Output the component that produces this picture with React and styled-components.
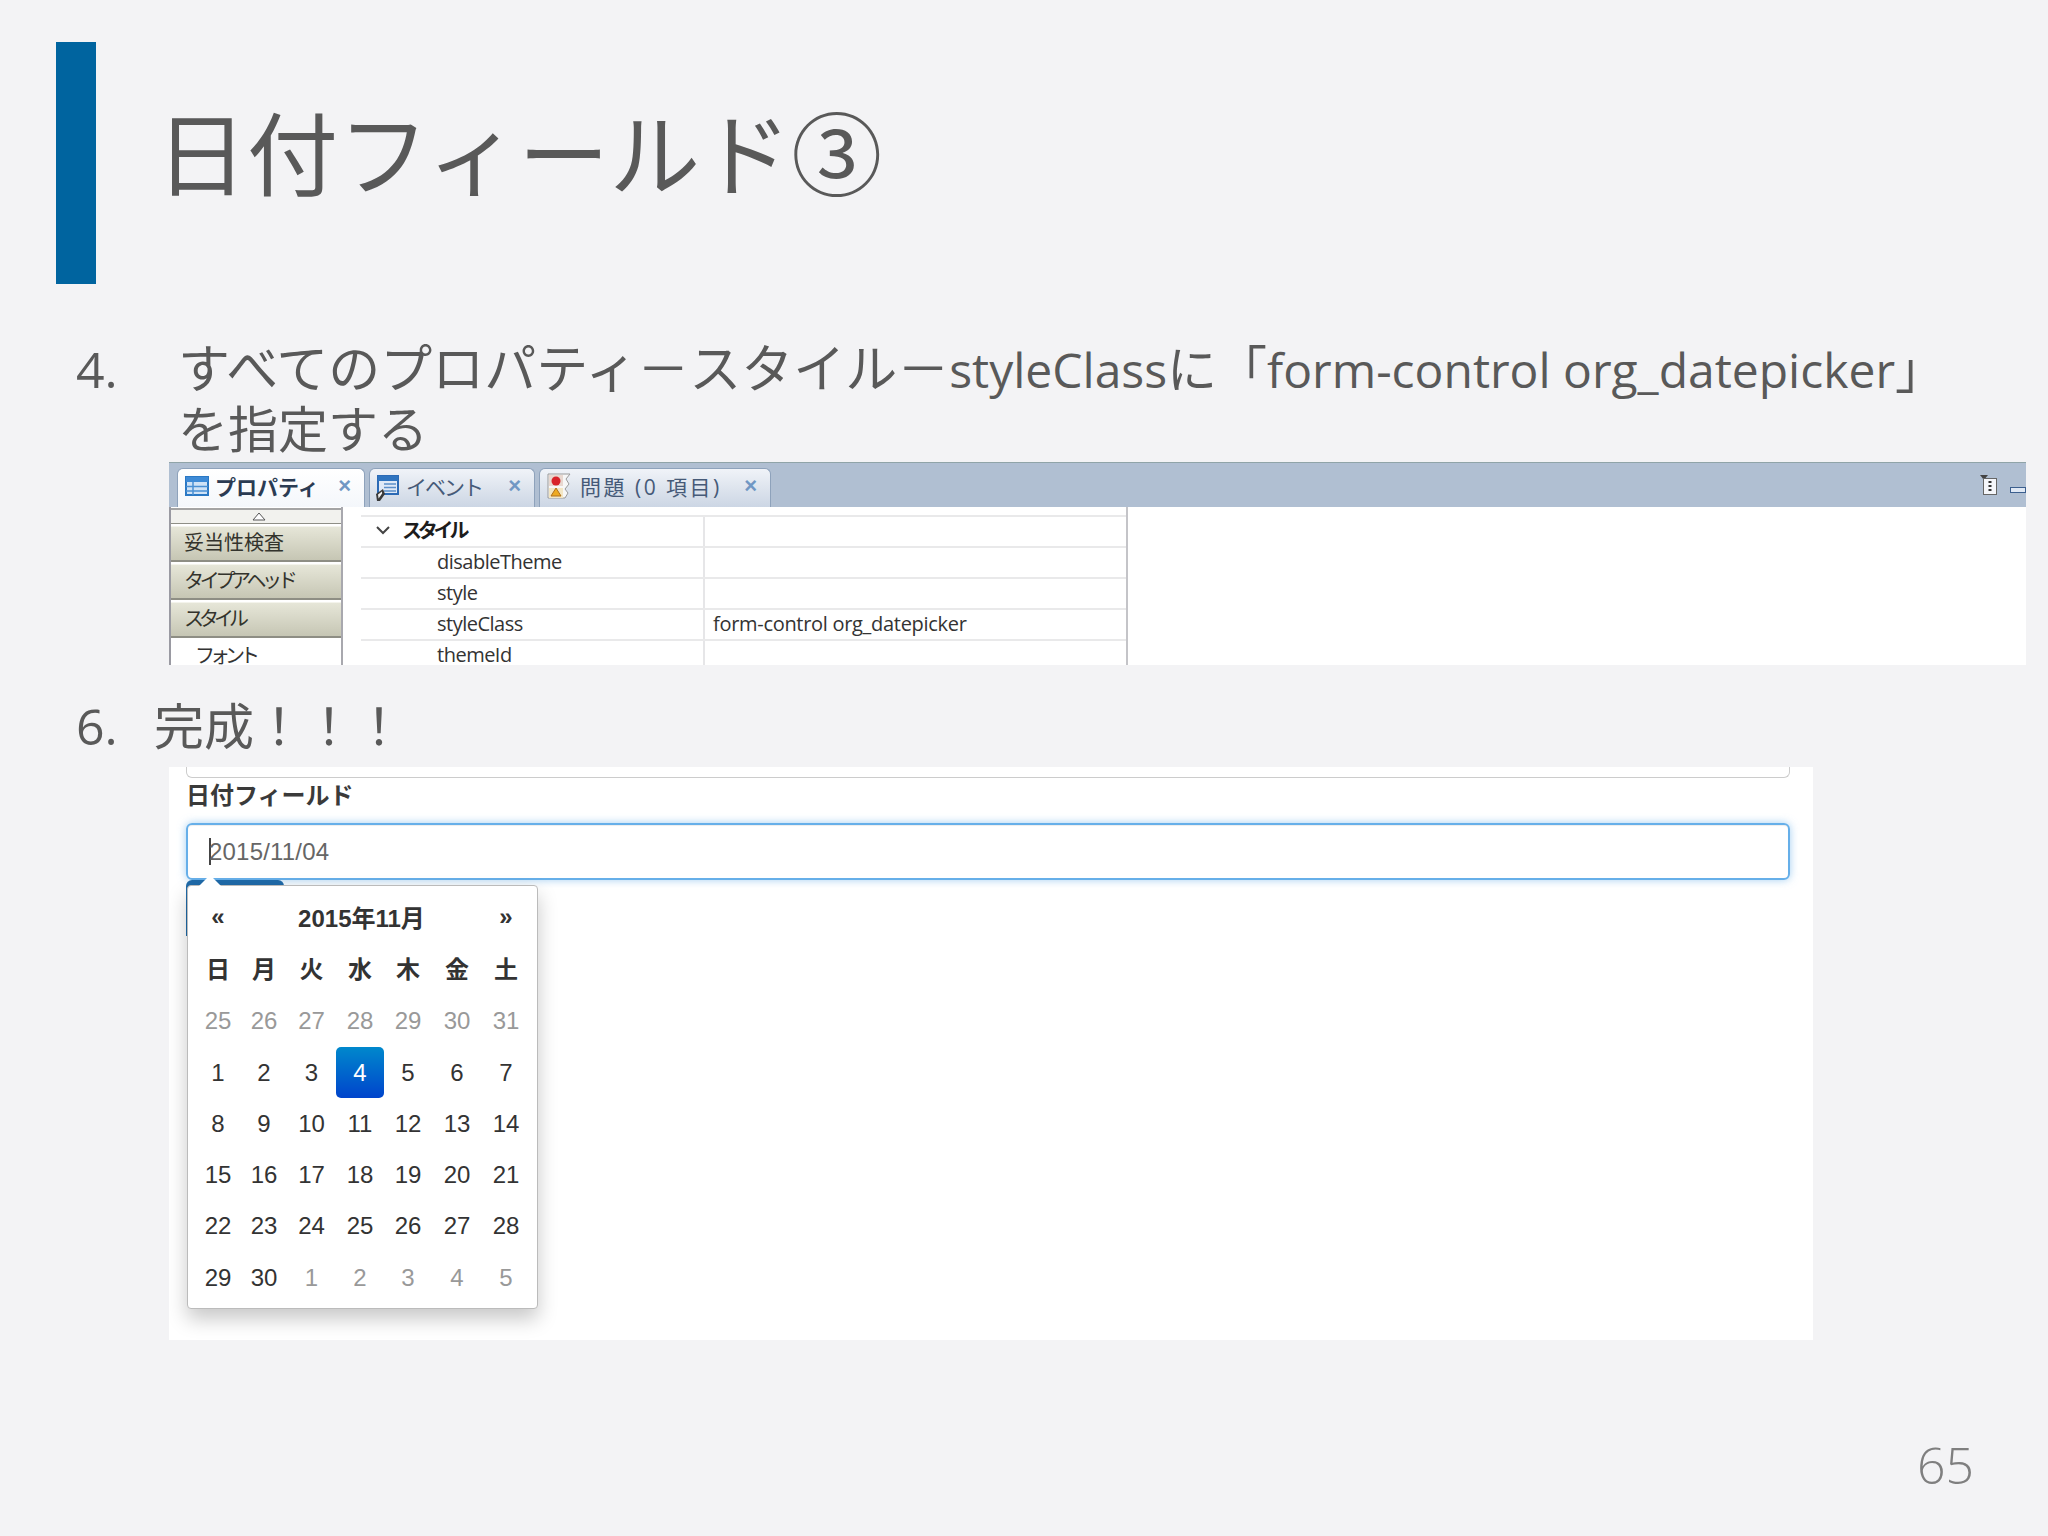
import styled, { createGlobalStyle } from "styled-components";

const GlobalStyle = createGlobalStyle`
  html, body {
    margin: 0;
    padding: 0;
    background: #f3f3f5;
  }
`;

const JP = `"Open Sans", "Noto Sans CJK JP", sans-serif`;
const ARIAL = `"Liberation Sans", "Noto Sans CJK JP", sans-serif`;

const Slide = styled.div`
  width: 2048px;
  height: 1536px;
  overflow: hidden;
  display: flex;
  flex-direction: column;
  background: #f3f3f5;
  font-family: ${JP};
`;

const Header = styled.div`
  display: flex;
  align-items: center;
  height: 242px;
  margin: 42px 0 0 56px;
`;

const AccentBar = styled.div`
  width: 40px;
  height: 242px;
  background: #00649f;
`;

const Title = styled.h1`
  margin: 0 0 18px 60px;
  font-size: 91px;
  line-height: 1;
  font-weight: 400;
  color: #595959;
`;

const Item = styled.div`
  display: flex;
  margin: ${(p) => p.$top}px 0 0 76px;
  font-size: 50px;
  line-height: 60px;
  font-weight: 400;
  color: #595959;
`;

const Num = styled.div`
  width: ${(p) => p.$w}px;
  flex: none;
`;

const Kana = styled.span`
  font-size: 52px;
  line-height: 1;
`;

const Latin = styled.span`
  font-size: 48px;
  line-height: 1;
`;

const Shot = styled.div`
  flex: none;
  overflow: hidden;
  background: #fff;
`;

const EclipseShot = styled(Shot)`
  width: 1857px;
  height: 203px;
  margin: 3px 0 0 169px;
`;

const TabBar = styled.div`
  height: 45px;
  display: flex;
  align-items: flex-end;
  gap: 4px;
  padding-left: 8px;
  background: #b0bfd2;
  border-top: 1px solid #90a4a8;
  box-sizing: border-box;
`;

const Tab = styled.div`
  width: ${(p) => p.$w}px;
  height: 39px;
  box-sizing: border-box;
  display: flex;
  align-items: center;
  padding: 0 13px 4px 7px;
  border: 1px solid #8ea2bb;
  border-bottom: none;
  border-radius: 6px 6px 0 0;
  background: ${(p) =>
    p.$active
      ? "linear-gradient(#ffffff, #f4f7fb)"
      : "linear-gradient(#f0f3f8, #ccd6e4)"};
  font-size: 21px;
  color: ${(p) => (p.$active ? "#2b3b52" : "#465a78")};
  white-space: nowrap;
`;

const TabLabel = styled.span`
  margin-left: ${(p) => p.$gap}px;
  font-weight: ${(p) => (p.$active ? 600 : 400)};
  letter-spacing: ${(p) => p.$spacing || 0}px;
`;

const TabClose = styled.span`
  margin-left: auto;
  color: #7097c4;
  font-size: 22px;
  font-weight: 700;
  font-family: ${ARIAL};
`;

const ViewTools = styled.div`
  margin-left: auto;
  align-self: center;
  display: flex;
  align-items: center;
`;

const PanelBody = styled.div`
  display: flex;
  height: 158px;
`;

const Sidebar = styled.div`
  width: 174px;
  flex: none;
  box-sizing: border-box;
  border-left: 2px solid #9a9aa2;
  border-right: 2px solid #a8a8ae;
  padding-top: 1px;
  display: flex;
  flex-direction: column;
`;

const ScrollUp = styled.div`
  height: 16px;
  flex: none;
  box-sizing: border-box;
  padding-left: 5px;
  display: flex;
  align-items: center;
  justify-content: center;
  border-top: 2px solid #a4a4a4;
  border-bottom: 1px solid #8f8f86;
  background: #f2f2ee;
`;

const Drawer = styled.div`
  height: 36px;
  flex: none;
  margin-top: 2px;
  box-sizing: border-box;
  padding: 0 0 5px 13px;
  display: flex;
  align-items: center;
  font-size: 20px;
  letter-spacing: ${(p) => p.$spacing || 0}px;
  color: #33332c;
  border-top: 1px solid #f4f4ec;
  border-bottom: 2px solid #8e8e84;
  background: linear-gradient(#e6e6d8, #c6c6b4);
`;

const SubItem = styled.div`
  height: 30px;
  flex: none;
  padding: 3px 0 0 24px;
  font-size: 20px;
  line-height: 30px;
  letter-spacing: -5px;
  color: #333;
`;

const PropTable = styled.div`
  width: 767px;
  margin-left: 18px;
  padding-top: 8px;
  flex: none;
  box-sizing: border-box;
  border-right: 2px solid #c4c4c8;
`;

const PropRow = styled.div`
  height: 31px;
  display: grid;
  grid-template-columns: 344px 1fr;
  border-top: 2px solid #e9e9ea;
  box-sizing: border-box;
  font-size: 20px;
  line-height: 26px;
  letter-spacing: -0.300px;
  color: #333;
`;

const PropName = styled.div`
  padding: 0 0 2px ${(p) => p.$indent}px;
  border-right: 2px solid #e6e6e8;
  display: flex;
  align-items: center;
  font-weight: ${(p) => (p.$bold ? 700 : 400)};
  letter-spacing: ${(p) => (p.$bold ? -4.2 : -0.5)}px;
  color: ${(p) => (p.$bold ? "#1c1c1c" : "#333")};
`;

const PropValue = styled.div`
  padding: 1px 0 0 8px;
`;

const Chevron = styled.svg`
  margin-right: 12px;
  flex: none;
`;

const BrowserShot = styled(Shot)`
  width: 1644px;
  height: 573px;
  margin: 11px 0 0 169px;
  padding: 0 23px 0 17px;
  box-sizing: border-box;
  font-family: ${ARIAL};
`;

const PrevInput = styled.div`
  height: 11px;
  box-sizing: border-box;
  border: 1px solid #ccc;
  border-top: none;
  border-radius: 0 0 6px 6px;
`;

const Label = styled.div`
  margin-top: 5px;
  height: 40px;
  font-size: 24px;
  line-height: 26px;
  font-weight: 700;
  color: #3a3a3a;
`;

const FieldWrap = styled.div`
  position: relative;
`;

const Input = styled.div`
  height: 57px;
  box-sizing: border-box;
  display: flex;
  align-items: center;
  padding-left: 21px;
  border: 2px solid #66afe9;
  border-radius: 6px;
  box-shadow: inset 0 1px 1px rgba(0, 0, 0, 0.075), 0 0 8px rgba(102, 175, 233, 0.6);
  font-size: 24px;
  letter-spacing: 0.200px;
  color: #666;
`;

const Caret = styled.span`
  width: 2px;
  height: 27px;
  margin-right: -2px;
  background: #444;
`;

const BlueTab = styled.div`
  position: absolute;
  left: 0;
  top: 57px;
  width: 98px;
  height: 56px;
  background: #1f6aa8;
  border-radius: 6px 6px 0 0;
`;

const Popup = styled.div`
  position: absolute;
  left: 1px;
  top: 62px;
  width: 351px;
  height: 424px;
  box-sizing: border-box;
  padding: 7px 7px;
  background: #fff;
  border: 1px solid #bbb;
  border-radius: 4px;
  box-shadow: 0 10px 20px rgba(0, 0, 0, 0.22);
  font-size: 24px;
  &::before {
    content: "";
    position: absolute;
    left: 11px;
    top: -11px;
    border-left: 11px solid transparent;
    border-right: 11px solid transparent;
    border-bottom: 11px solid #fff;
  }
`;

const CalGrid = styled.div`
  display: grid;
  grid-template-columns: 46px 46px 49px 48px 48px 50px 48px;
  grid-auto-rows: 51.300px;
`;

const MonthTitle = styled.div`
  grid-column: 2 / span 5;
  display: flex;
  align-items: center;
  justify-content: center;
  padding-bottom: 4px;
  font-weight: 700;
  color: #333;
`;

const Cell = styled.div`
  display: flex;
  align-items: center;
  justify-content: center;
  border-radius: 5px;
  padding-bottom: ${(p) => (p.$bold ? 4 : 0)}px;
  color: ${(p) => (p.$active ? "#fff" : p.$old ? "#999" : "#333")};
  font-weight: ${(p) => (p.$bold ? 700 : 400)};
  background: ${(p) => (p.$active ? "linear-gradient(#0088cc, #0044cc)" : "transparent")};
`;

const PageNo = styled.div`
  margin: 95px 0 0 1917px;
  font-size: 50px;
  line-height: 60px;
  font-weight: 300;
  color: #7f7f7f;
`;

const EventSvg = styled.svg`
  margin-left: -2px;
  overflow: visible;
`;

const week = ["日", "月", "火", "水", "木", "金", "土"];
const days = [
  [25, 1], [26, 1], [27, 1], [28, 1], [29, 1], [30, 1], [31, 1],
  ...Array.from({ length: 30 }, (_, i) => [i + 1, 0]),
  [1, 1], [2, 1], [3, 1], [4, 1], [5, 1],
];

function TableIcon() {
  return (
    <svg width="24" height="20" viewBox="0 0 24 20">
      <rect x="1" y="1" width="22" height="18" fill="#cfe2f6" stroke="#2a78c4" strokeWidth="2" />
      <rect x="1" y="1" width="22" height="5" fill="#3d8ad6" />
      <path d="M1 10.500h22M1 15h22M8 6v13" stroke="#4a90d4" strokeWidth="1.500" fill="none" />
    </svg>
  );
}

function EventIcon() {
  return (
    <EventSvg width="25" height="30" viewBox="-2 0 25 30">
      <rect x="1" y="5" width="20" height="18" fill="#dfe9f7" stroke="#2c6ab5" strokeWidth="2" />
      <rect x="1" y="5" width="20" height="5" fill="#2f74c0" />
      <path d="M7 13h12M7 16.500h12M7 20h12" stroke="#5b8fc9" strokeWidth="1.500" />
      <path d="M6 18l-7 5 1 7h3l5-7z" fill="#3a3a3a" />
      <path d="M5 20.500l-4 3 0.600 4 3.500-5z" fill="#f0f0f0" />
    </EventSvg>
  );
}

function ProblemIcon() {
  return (
    <svg width="24" height="26" viewBox="0 0 24 26">
      <path d="M1 1h22l-4 5 3 5-4 5 3 4-3 5H1z" fill="#f7f7f7" stroke="#9a9a9a" />
      <rect x="2" y="2" width="14" height="11" fill="#e8d8d0" />
      <rect x="2" y="15" width="14" height="10" fill="#f3e6c4" />
      <circle cx="9" cy="8" r="4.500" fill="#d8232a" />
      <path d="M9 15l5 8H4z" fill="#eeaa22" stroke="#b0701c" />
    </svg>
  );
}

function ViewMenuIcon() {
  return (
    <svg width="46" height="20" viewBox="0 0 46 20">
      <path d="M0 0h8L4 5z" fill="#444" />
      <rect x="3.500" y="3.500" width="13" height="16" fill="#f4f6fa" stroke="#666" />
      <path d="M10 6v2M10 10v2M10 14v2" stroke="#333" strokeWidth="3" />
      <rect x="30.500" y="12.500" width="15" height="5" fill="#dfe8f4" stroke="#3c5f8e" />
    </svg>
  );
}

export default function App() {
  return (
    <Slide>
      <GlobalStyle />
      <Header>
        <AccentBar />
        <Title>日付フィールド③</Title>
      </Header>

      <Item $top={55}>
        <Num $w={102}>4.</Num>
        <div>
          <Kana>すべてのプロパティ－スタイル－</Kana><Latin>styleClass</Latin>に「<Latin>form-control org_datepicker</Latin>」
          <br />
          を指定する
        </div>
      </Item>

      <EclipseShot>
        <TabBar>
          <Tab $w={188} $active>
            <TableIcon />
            <TabLabel $gap={6} $active>プロパティ</TabLabel>
            <TabClose>×</TabClose>
          </Tab>
          <Tab $w={166}>
            <EventIcon />
            <TabLabel $gap={6} $spacing={-2}>イベント</TabLabel>
            <TabClose>×</TabClose>
          </Tab>
          <Tab $w={232}>
            <ProblemIcon />
            <TabLabel $gap={9} $spacing={2.5}>問題 (0 項目)</TabLabel>
            <TabClose>×</TabClose>
          </Tab>
          <ViewTools>
            <ViewMenuIcon />
          </ViewTools>
        </TabBar>
        <PanelBody>
          <Sidebar>
            <ScrollUp>
              <svg width="16" height="9" viewBox="0 0 16 9">
                <path d="M8 1l6 7H2z" fill="#fff" stroke="#555" />
              </svg>
            </ScrollUp>
            <Drawer>妥当性検査</Drawer>
            <Drawer $spacing={-4.3}>タイプアヘッド</Drawer>
            <Drawer $spacing={-5}>スタイル</Drawer>
            <SubItem>フォント</SubItem>
          </Sidebar>
          <PropTable>
            <PropRow>
              <PropName $indent={15} $bold>
                <Chevron width="14" height="9" viewBox="0 0 14 9">
                  <path d="M1 1l6 6 6-6" fill="none" stroke="#444" strokeWidth="2" />
                </Chevron>
                スタイル
              </PropName>
              <PropValue />
            </PropRow>
            <PropRow>
              <PropName $indent={76}>disableTheme</PropName>
              <PropValue />
            </PropRow>
            <PropRow>
              <PropName $indent={76}>style</PropName>
              <PropValue />
            </PropRow>
            <PropRow>
              <PropName $indent={76}>styleClass</PropName>
              <PropValue>form-control org_datepicker</PropValue>
            </PropRow>
            <PropRow>
              <PropName $indent={76}>themeId</PropName>
              <PropValue />
            </PropRow>
          </PropTable>
        </PanelBody>
      </EclipseShot>

      <Item $top={31}>
        <Num $w={78}>6.</Num>
        <div>完成！！！</div>
      </Item>

      <BrowserShot>
        <PrevInput />
        <Label>日付フィールド</Label>
        <FieldWrap>
          <BlueTab />
          <Input>
            <Caret />
            2015/11/04
          </Input>
          <Popup>
            <CalGrid>
              <Cell $bold>«</Cell>
              <MonthTitle>2015年11月</MonthTitle>
              <Cell $bold>»</Cell>
              {week.map((d) => (
                <Cell key={d} $bold>{d}</Cell>
              ))}
              {days.map(([d, old], i) => (
                <Cell key={i} $old={old} $active={!old && d === 4}>{d}</Cell>
              ))}
            </CalGrid>
          </Popup>
        </FieldWrap>
      </BrowserShot>

      <PageNo>65</PageNo>
    </Slide>
  );
}
